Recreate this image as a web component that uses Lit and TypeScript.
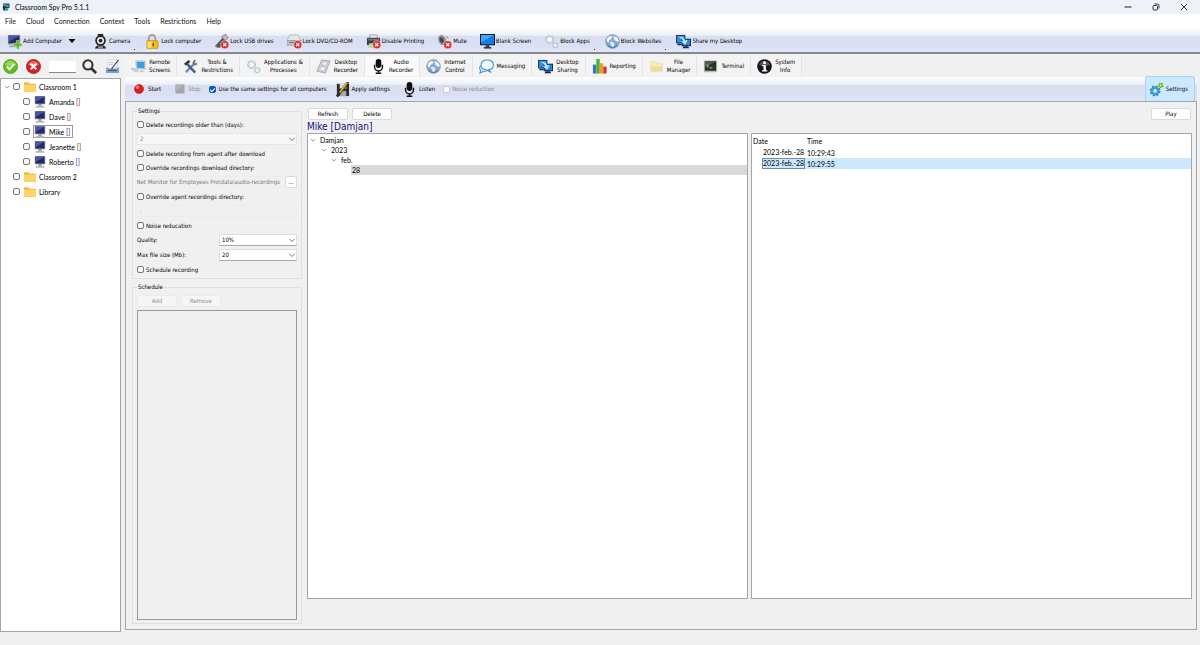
import { LitElement, html, svg, css, nothing, type TemplateResult } from "lit";
import { customElement, property, state } from "lit/decorators.js";
import { classMap } from "lit/directives/class-map.js";

/* ---------- icon artwork, drawn on a 16 x 16 grid ---------- */

const noBadge = svg`
  <circle cx="11.500" cy="11.500" r="4.300" fill="#e02a2a" stroke="#fff" stroke-width=".5"/>
  <path d="M9.900 9.900l3.200 3.200M13.100 9.900l-3.200 3.200" stroke="#fff" stroke-width="1.400"/>`;

const globe = svg`
  <circle cx="8" cy="8" r="7.400" fill="#86a9d3" stroke="#8b98aa" stroke-width=".6"/>
  <path d="M2 5l3-3 3 .6L7 5 4.600 6.500 4 9 2 8zM9 2l4 1.600 2 4-2.600.4L10 6z" fill="#f5f9fd"/>
  <path d="M7 8l3 1.500L9.500 13l-2 1.600-1-3L5 9z" fill="#dbe8f6"/>
  <path d="M2.500 11.500c2 3.400 8 4 11 0" stroke="#41689c" fill="none"/>`;

const gears = svg`
  <circle cx="6" cy="6" r="4" fill="#eef4f8" stroke="#b0bfcb" stroke-width="1.600" stroke-dasharray="1.600 .7"/>
  <circle cx="6" cy="6" r="3.200" fill="#f4f9fc" stroke="#b4c3cf" stroke-width=".8"/>
  <circle cx="12" cy="12" r="2.600" fill="#eef4f8" stroke="#a3b4c2" stroke-width="1.400" stroke-dasharray="1.300 .6"/>`;

const share = svg`
  <path d="M0 1h10v9H0z" fill="#123a66"/><path d="M1 2h8v7H1z" fill="#2d8fe0"/>
  <path d="M6 5h10v8H6z" fill="#0e2c50"/><path d="M7 6h8v6H7z" fill="#2585e0"/>
  <path d="M8 13h5l1 2.300H7z" fill="#223"/><path d="M2 10h4v2H1z" fill="#234"/>
  <path d="M2 3c5-.5 7 1 8 4l2.500-.6-2.500 5-5-3.400 2.500-.4C7 5.500 5 4 2 3z" fill="#b9e4fb"/>`;

const mic = svg`
  <rect x="5" y="0" width="6" height="9.500" rx="3" fill="#0c0c0c"/>
  <path d="M3.800 6v2.500a4.200 4.200 0 0 0 8.400 0V6M8 12.500V15" fill="none" stroke="#0c0c0c" stroke-width="1.500"/>
  <path d="M5 15.200h6" stroke="#0c0c0c" stroke-width="1.600"/>`;

const ICONS: Record<string, TemplateResult> = {
  app: svg`<path d="M2 1h13v9H2z" fill="#164a66"/><path d="M3 2h5v4H3z" fill="#3fa66a"/><path d="M9 3h5v5H9z" fill="#2c6fb0"/>
    <path d="M1 8h6v7H3z" fill="#19324d"/><path d="M8 10l5 1-1 4H6z" fill="#46955b"/><path d="M9 4l3 2-3 2z" fill="#e4d57a"/>`,
  pc: svg`<path d="M1 0h14v11H1z" fill="#8a8f98"/><path d="M2 1h12v9H2z" fill="#252b66"/><path d="M2 1h12L2 8z" fill="#4d57a0"/>
    <path d="M6 11h4v2H6z" fill="#777"/><path d="M3 13h10l1 2.500H2z" fill="#b5b8bd"/>`,
  addPc: svg`<path d="M1 1h13v10H1z" fill="#777d8a"/><path d="M2 2h11v7.500H2z" fill="#252b66"/><path d="M2 2h11L2 8z" fill="#4d57a0"/>
    <path d="M3 12h7l1 2H2z" fill="#a5a8ad"/><path d="M10 7h3v3h3v3h-3v3h-3v-3H7v-3h3z" fill="#59b52c" stroke="#e8f6df" stroke-width=".5"/>`,
  camera: svg`<path d="M5 0h6v2H5z" fill="#222"/><circle cx="8" cy="7" r="5.600" fill="#222"/><circle cx="8" cy="7" r="3.800" fill="#e9e9e9"/>
    <circle cx="8" cy="7" r="2" fill="#222"/><path d="M2 15.500c1-3 3-3.500 6-3.500s5 .5 6 3.500z" fill="#222"/><path d="M5.500 13.300h5v1.200h-5z" fill="#ddd"/>`,
  lock: svg`<path d="M4 8V4.500a3.500 3.500 0 0 1 7 0V8" fill="none" stroke="#9da1a8" stroke-width="2"/>
    <rect x="2" y="7" width="12" height="8.500" rx="1" fill="#f4b81c" stroke="#b98409" stroke-width=".6"/><path d="M3 8h4v6.500H3z" fill="#ffe07a"/>
    <path d="M8 9.500h1.500v3.500H8z" fill="#7a5606"/>`,
  usb: svg`<path d="M1 13l8-9 4 3-7 8z" fill="#555a60"/><path d="M8 3l4-3 3 4-3 3z" fill="#b9bec5" stroke="#555" stroke-width=".6"/>
    <path d="M2 12c0 3 3 3 4 1" fill="none" stroke="#777"/>${noBadge}`,
  dvd: svg`<path d="M3 1h9l3 6H0z" fill="#e6e7ea" stroke="#999" stroke-width=".6"/><path d="M0 7h15v5H0z" fill="#c0c3c8" stroke="#888" stroke-width=".6"/>
    <path d="M2 9h6" stroke="#666"/>${noBadge}`,
  printer: svg`<path d="M4 1h8v5H4z" fill="#e9e9ea" stroke="#777" stroke-width=".6"/><rect x="1" y="4" width="14" height="8" rx="1" fill="#3a3d42"/>
    <path d="M2 5h12v2H2z" fill="#70757c"/><path d="M3 10h7v5H3z" fill="#b7dba5"/>${noBadge}`,
  mute: svg`<ellipse cx="5.500" cy="6.500" rx="4" ry="5.500" fill="#8b8e93" transform="rotate(-20 5.500 6.500)"/>
    <ellipse cx="5" cy="6.500" rx="2" ry="3.200" fill="#45484c" transform="rotate(-20 5 6.500)"/><path d="M10 2l2 3" stroke="#888"/>${noBadge}`,
  blank: svg`<path d="M0 0h16v12H0z" fill="#101522"/><path d="M1 1h14v10H1z" fill="#157bea"/><path d="M1 1h14L1 9z" fill="#43a4fb"/>
    <path d="M6 12h4v2H6z" fill="#333"/><path d="M4 14h8v1.500H4z" fill="#222"/>`,
  gears,
  globe,
  share,
  mic,
  remote: svg`<path d="M5 2h10v9L6 10z" fill="#dfe4ea" stroke="#9aa5b0" stroke-width=".6"/><path d="M6 3h8.300v7l-7.800-.8z" fill="#3e9fe8"/>
    <path d="M0 9l6 1 3 3-4 1.500-5-3z" fill="#c9ccd1"/><path d="M9 12l5 1-3 1.500z" fill="#b0b4ba"/>`,
  tools: svg`<path d="M3 14L13 4" stroke="#7b8794" stroke-width="2.400"/><path d="M13 1l-2 3 1 2 3-1" fill="none" stroke="#69737e" stroke-width="1.800"/>
    <path d="M4 5l9 9.500" stroke="#3c5c94" stroke-width="2.600"/><path d="M1 5l5-4 2 2-5 4z" fill="#33373d"/>`,
  film: svg`<path d="M6 1l9 1-5 13-9-2z" fill="#cfd3db" stroke="#8d93a0" stroke-width=".7"/>
    <path d="M7.300 3l5 .6-1.300 3.400-5-.8zM5.300 8l5 .9-1.500 4-5-1z" fill="#f1f3f7" stroke="#8d93a0" stroke-width=".4"/>`,
  chat: svg`<path d="M8.500 1c4 0 6.800 2 6.800 5s-2 5-5 5.300L13 14.500l-6-3.200C4 11 2.200 9 2.200 6S5 1 8.500 1z" fill="#f8fcff" stroke="#3f97d8" stroke-width="1.200"/>
    <path d="M2.300 7C0 8.500.2 11 2 12l-1 3 4-2c2 .4 3 .2 4-1" fill="none" stroke="#3f97d8" stroke-width="1.100"/>`,
  chart: svg`<path d="M1 6h3.400v9.500H1z" fill="#3572d0"/><path d="M4.600 0h3.600v15.500H4.600z" fill="#4cae32"/><path d="M8.400 4.500h3.400v11H8.400z" fill="#f09a1a"/>
    <path d="M12 8h3.500v7.500H12z" fill="#d83228"/>`,
  file: svg`<path d="M2 3h5l1 1.500h6V13H2z" fill="#f5ecc0" stroke="#ddcf93" stroke-width=".5"/><path d="M2 8h12v5H2z" fill="#eddd92"/>`,
  terminal: svg`<rect x="1" y="1.500" width="14" height="12.500" rx="1" fill="#b7bab4"/><path d="M2 2.500h12v10H2z" fill="#28352a"/><path d="M2 2.500h12L2 9z" fill="#4b5f4c"/>
    <path d="M4 6l2 1.500L4 9M7 9.500h3" fill="none" stroke="#e8f0e4" stroke-width=".8"/>`,
  info: svg`<circle cx="8" cy="8" r="7.800" fill="#15151c"/><path d="M2 6a6.500 6.500 0 0 1 12 0c-3 2-9 2-12 0z" fill="#50505c"/>
    <circle cx="8" cy="4" r="1.600" fill="#fff"/><path d="M5.500 6.400h4V12H11v1.200H5.300V12H7V7.600H5.500z" fill="#fff"/>`,
  ok: svg`<circle cx="8" cy="8" r="7.500" fill="#62bb1d" stroke="#4a9a12" stroke-width=".8"/><path d="M2 6a6.500 6.500 0 0 1 12 0C11 8 5 8 2 6z" fill="#95d85a"/>
    <path d="M4 8l3 3 5-5.500" fill="none" stroke="#fff" stroke-width="2.200"/>`,
  cancel: svg`<circle cx="8" cy="8" r="7.500" fill="#d81f1f" stroke="#a81616" stroke-width=".8"/><path d="M2 6a6.500 6.500 0 0 1 12 0C11 8 5 8 2 6z" fill="#ee6262"/>
    <path d="M5 5l6 6M11 5l-6 6" stroke="#fff" stroke-width="2.400"/>`,
  search: svg`<circle cx="6.300" cy="6.300" r="4.900" fill="none" stroke="#333" stroke-width="2.200"/><path d="M10 10l5 5" stroke="#333" stroke-width="3"/>`,
  note: svg`<path d="M1 9h14v6H1z" fill="#7fa5cf"/><path d="M3 1h10v9H3z" fill="#f6f7f9" stroke="#b9c0c9" stroke-width=".5"/>
    <path d="M4 4h6M4 6h4" stroke="#aab4c0" stroke-width=".8"/><path d="M14.500 1L8 9l-1 2" stroke="#444" stroke-width="1.200" fill="none"/><path d="M3 11.500h10v1.500H3z" fill="#3e5f8a"/>`,
  start: svg`<circle cx="8" cy="8" r="6" fill="#de1d1d" stroke="#a91414" stroke-width=".8"/><circle cx="6" cy="5.500" r="2.500" fill="#f27070"/>`,
  stop: svg`<path d="M2 2h12v12H2z" fill="#a5a5a5"/><path d="M2 2h12L2 11z" fill="#b4b4b4"/>`,
  save: svg`<path d="M2 2h13v13H2z" fill="#2b2b2e"/><path d="M5 2h7v5H5z" fill="#d9d9dc"/><path d="M5 9.500h7V15H5z" fill="#a9a9ad"/>
    <path d="M14 0L5 12l-3 3.500" stroke="#2b2b2e" stroke-width="2.800" fill="none"/><path d="M13 .5L5 11.500" stroke="#e8b323" stroke-width="1.700" fill="none"/>`,
  folder: svg`<path d="M0 1.500h6L7.500 3.500H16v11H0z" fill="#f3b73c"/><path d="M0 5h16v9.500H0z" fill="#ffd56b"/>`,
  settings: svg`<circle cx="6.500" cy="9.500" r="4.500" fill="#3f9bd3" stroke="#2d84bd" stroke-width="2.600" stroke-dasharray="2.100 1.400"/>
    <circle cx="6.500" cy="9.500" r="4.600" fill="#3f9bd3"/><circle cx="6.500" cy="9.500" r="2" fill="#d3edff"/>
    <circle cx="12.500" cy="3.500" r="2" fill="#7fcf30" stroke="#71bd28" stroke-width="2.200" stroke-dasharray="1.600 .6"/><circle cx="12.500" cy="3.500" r=".9" fill="#dff4c8"/>`,
  chevron: svg`<path d="M2.500 5.500L8 11l5.500-5.500" fill="none" stroke="#555" stroke-width="1.600"/>`,
  drop: svg`<path d="M1 4h14l-7 8z" fill="#000"/>`,
  minimize: svg`<path d="M1 8h14" stroke="#222" stroke-width="2"/>`,
  restore: svg`<rect x="2" y="5" width="9" height="9" rx="2" fill="none" stroke="#222" stroke-width="1.800"/>
    <path d="M5 2h6q3 0 3 3v6" fill="none" stroke="#222" stroke-width="1.800"/>`,
  close: svg`<path d="M2 2l12 12M14 2L2 14" stroke="#222" stroke-width="1.800"/>`,
};

const icon = (name: string, size = "m") =>
  html`<svg class="icon ${size}" viewBox="0 0 16 16" aria-hidden="true">${ICONS[name]}</svg>`;

const shared = css`
  * { box-sizing: border-box; }
  :host {
    --ui: "DejaVu Sans Condensed", "DejaVu Sans", sans-serif;
    --shell: Lato, "Open Sans", sans-serif;
    --line: #a3a5ad;
    font: 6px/8px var(--ui);
    color: #000;
  }
  button, input, select { font: inherit; color: inherit; margin: 0; padding: 0; border: 0; background: none; }
  button { display: flex; align-items: center; white-space: nowrap; }
  .icon { display: block; flex: none; }
  .xs { width: 6px; height: 6px; }
  .s { width: 8px; height: 8px; }
  .sm { width: 12px; height: 12px; }
  .m { width: 15px; height: 15px; }
  input[type="checkbox"] {
    appearance: none; flex: none; width: 7px; height: 7px; position: relative;
    border: 1px solid #777; border-radius: 2px; background: #f8f8f8;
  }
  input[type="checkbox"]:checked { background: #0a5fb4; border-color: #0a5fb4; }
  input[type="checkbox"]:checked::after {
    content: ""; position: absolute; left: 1px; top: 0; width: 2px; height: 4px;
    border: solid #fff; border-width: 0 1px 1px 0; transform: rotate(45deg);
  }
  input[type="checkbox"]:disabled { border-color: #ccc; background: #fbfbfb; }
  .band { background: linear-gradient(#fdfdff, #eef0fa 30%, #d9def1 34%, #dce0f3 80%, #e4e8f7); }
  .push {
    justify-content: center; width: 40px; height: 12px; background: #fdfdfd;
    border: 1px solid #dadada; border-radius: 2px;
  }
  .push:disabled { color: #8a8a8a; background: #f6f6f6; border-color: #ebebeb; }
`;

/* ---------- computers tree on the left ---------- */

interface Room { name: string; open: boolean; members: string[] }

@customElement("computer-tree")
class ComputerTree extends LitElement {
  @state() private selected = "Mike";
  private rooms: Room[] = [
    { name: "Classroom 1", open: true, members: ["Amanda", "Dave", "Mike", "Jeanette", "Roberto"] },
    { name: "Classroom 2", open: false, members: [] },
    { name: "Library", open: false, members: [] },
  ];

  static styles = [shared, css`
    :host { display: flex; flex-direction: column; }
    .tools { display: flex; align-items: center; gap: 8px; height: 25px; margin-bottom: -1px; padding: 0 3px; }
    .find { width: 27px; height: 12px; margin-right: -2px; background: #fff; border-bottom: 1px solid #888; }
    .list { flex: 1; margin: 0; padding: 0; list-style: none; background: #fff; border: 1px solid var(--line); font: 7px/8px var(--shell); }
    .row { display: flex; align-items: center; height: 15px; gap: 3px; padding-left: 3px; }
    .twist { width: 6px; }
    .row label { display: flex; align-items: center; gap: 3px; height: 13px; padding-right: 2px; border: 1px solid transparent; }
    .child { padding-left: 13px; }
    .row .picked { border-color: #999; }
    .red { color: #7c2020; }
    .blue { color: #1c3478; }
  `];

  private row(name: string, opts: { child?: boolean; open?: boolean }) {
    const id = "pc-" + name.replace(" ", "-");
    return html`<li class=${classMap({ row: true, child: !!opts.child })}>
      <span class="twist">${opts.open ? icon("chevron", "xs") : nothing}</span>
      <input type="checkbox" id=${id} />
      <label for=${id} class=${classMap({ picked: name === this.selected })} @dblclick=${() => (this.selected = name)}>
        ${icon(opts.child ? "pc" : "folder", "sm")}
        <span>${name}${opts.child ? html` <span class=${name === "Roberto" || name === "Mike" ? "blue" : "red"}>[]</span>` : nothing}</span>
      </label>
    </li>`;
  }

  render() {
    return html`
      <div class="tools">
        <button aria-label="Select all">${icon("ok")}</button>
        <button aria-label="Clear selection">${icon("cancel")}</button>
        <input class="find" aria-label="Find" />
        <button aria-label="Search">${icon("search")}</button>
        <button aria-label="Edit">${icon("note")}</button>
      </div>
      <ul class="list">
        ${this.rooms.map((r) => html`${this.row(r.name, { open: r.open })}${r.members.map((m) => this.row(m, { child: true }))}`)}
      </ul>`;
  }
}

/* ---------- settings column ---------- */

@customElement("recorder-settings")
class RecorderSettings extends LitElement {
  static styles = [shared, css`
    :host { display: flex; flex-direction: column; gap: 3px; }
    fieldset { display: flex; flex-direction: column; gap: 3px; margin: 0; min-width: 0; padding: 3px 4px; border: 1px solid #dfdfdf; }
    legend { padding: 0 1px; height: 10px; line-height: 10px; }
    .fill { flex: 1; }
    .check { display: flex; align-items: center; gap: 2px; height: 11px; white-space: nowrap; }
    .field { display: grid; grid-template-columns: 82px 1fr; align-items: center; height: 12px; }
    .combo { position: relative; height: 12px; }
    .combo select { appearance: none; width: 100%; height: 12px; padding-left: 2px; background: #fff; border: 1px solid #ddd; border-bottom-color: #aaa; }
    .combo select:disabled { color: #888; opacity: 1; background: #f7f7f7; border-color: #e6e6e6; }
    .combo .icon { position: absolute; right: 1px; top: 2px; pointer-events: none; }
    .path { display: flex; gap: 4px; height: 12px; color: #777; }
    .path input { flex: 1; min-width: 0; border: 1px solid #ececec; border-left: 0; direction: rtl; text-align: right; }
    .path .plain { direction: ltr; text-align: left; padding-left: 3px; }
    .path button { width: 12px; color: #000; }
    .buttons { display: flex; gap: 4px; }
    .slots { flex: 1; border: 1px solid #999; }
  `];

  private check(id: string, text: string) {
    return html`<div class="check"><input type="checkbox" id=${id} /><label for=${id}>${text}</label></div>`;
  }

  private combo(id: string, value: string, disabled = false) {
    return html`<div class="combo"><select id=${id} aria-label=${id} ?disabled=${disabled}><option>${value}</option></select>${icon("chevron", "s")}</div>`;
  }

  render() {
    return html`
      <fieldset>
        <legend>Settings</legend>
        ${this.check("older", "Delete recordings older than (days):")}
        ${this.combo("days", "2", true)}
        ${this.check("after", "Delete recording from agent after download")}
        ${this.check("download", "Override recordings download directory:")}
        <div class="path">
          <input disabled aria-label="Download directory" value="Net Monitor for Employees Pro\\data\\audio-recordings" />
          <button class="push" aria-label="Browse">...</button>
        </div>
        ${this.check("agent", "Override agent recordings directory:")}
        <div class="path"><input class="plain" disabled aria-label="Agent directory" value="." /></div>
        ${this.check("noise", "Noise reducation")}
        <div class="field"><label for="quality">Quality:</label>${this.combo("quality", "10%")}</div>
        <div class="field"><label for="size">Max file size (Mb):</label>${this.combo("size", "20")}</div>
        ${this.check("schedule", "Schedule recording")}
      </fieldset>
      <fieldset class="fill">
        <legend>Schedule</legend>
        <div class="buttons"><button class="push" disabled>Add</button><button class="push" disabled>Remove</button></div>
        <div class="slots"></div>
      </fieldset>`;
  }
}

/* ---------- recordings browser ---------- */

@customElement("recordings-view")
class RecordingsView extends LitElement {
  @property() owner = "Mike [Damjan]";
  private nodes = [
    { text: "Damjan", depth: 0 },
    { text: "2023", depth: 1 },
    { text: "feb.", depth: 2 },
    { text: "28", depth: 3, picked: true },
  ];
  private files = [
    { date: "2023-feb.-28", time: "10:29:43" },
    { date: "2023-feb.-28", time: "10:29:55", picked: true },
  ];

  static styles = [shared, css`
    :host { display: grid; grid-template-columns: 1fr 1fr; gap: 3px; min-width: 0; }
    .pane { display: flex; flex-direction: column; min-width: 0; }
    .head { height: 26px; }
    .buttons { display: flex; gap: 4px; padding: 1px; }
    .right { justify-content: flex-end; }
    h1 { margin: 0; font: 10px/12px var(--ui); color: #10107c; }
    .box { flex: 1; background: #fff; border: 1px solid var(--line); font: 7px/10px var(--shell); }
    .tree { margin: 0; padding: 1px 0 0; list-style: none; }
    .node { display: flex; align-items: center; height: 10px; }
    .d1 { padding-left: 11px; }
    .d2 { padding-left: 21px; }
    .d3 { padding-left: 31px; }
    .twist { width: 12px; padding-left: 2px; }
    .name { flex: 1; }
    .picked .name { background: #d9d9d9; padding-left: 1px; }
    table { width: 100%; border-collapse: collapse; table-layout: fixed; white-space: nowrap; }
    th { height: 13px; font-weight: 400; text-align: left; padding: 0 2px; }
    .date { width: 53px; padding: 0 1px; }
    td { height: 11px; padding: 0 2px; }
    td:first-child { padding: 0 0 0 10px; }
    .chip { display: block; line-height: 9px; border: 1px solid transparent; }
    .on .chip { border-color: #6d8ba3; background: #cce8ff; }
    .on td + td { background: #cce8ff; }
  `];

  render() {
    return html`
      <section class="pane">
        <div class="head">
          <div class="buttons"><button class="push">Refresh</button><button class="push">Delete</button></div>
          <h1>${this.owner}</h1>
        </div>
        <ul class="box tree">
          ${this.nodes.map((n) => html`<li class=${classMap({ node: true, ["d" + n.depth]: true, picked: !!n.picked })}>
            <span class="twist">${n.picked ? nothing : icon("chevron", "xs")}</span><span class="name">${n.text}</span></li>`)}
        </ul>
      </section>
      <section class="pane">
        <div class="head"><div class="buttons right"><button class="push">Play</button></div></div>
        <div class="box">
          <table>
            <thead><tr><th class="date">Date</th><th>Time</th></tr></thead>
            <tbody>${this.files.map((f) => html`<tr class=${f.picked ? "on" : ""}><td><span class="chip">${f.date}</span></td><td>${f.time}</td></tr>`)}</tbody>
          </table>
        </div>
      </section>`;
  }
}

/* ---------- window ---------- */

const MENU = ["File", "Cloud", "Connection", "Context", "Tools", "Restrictions", "Help"];

const ACTIONS: { text: string; icon: string; menu?: "arrow" | "dot" }[] = [
  { text: "Add Computer", icon: "addPc", menu: "arrow" },
  { text: "Camera", icon: "camera", menu: "dot" },
  { text: "Lock computer", icon: "lock" },
  { text: "Lock USB drives", icon: "usb" },
  { text: "Lock DVD/CD-ROM", icon: "dvd" },
  { text: "Disable Printing", icon: "printer" },
  { text: "Mute", icon: "mute" },
  { text: "Blank Screen", icon: "blank" },
  { text: "Block Apps", icon: "gears", menu: "dot" },
  { text: "Block Websites", icon: "globe", menu: "dot" },
  { text: "Share my Desktop", icon: "share" },
];

const TABS: [string, string, string?][] = [
  ["remote", "Remote", "Screens"],
  ["tools", "Tools &", "Restrictions"],
  ["gears", "Applications &", "Processes"],
  ["film", "Desktop", "Recorder"],
  ["mic", "Audio", "Recorder"],
  ["globe", "Internet", "Control"],
  ["chat", "Messaging"],
  ["share", "Desktop", "Sharing"],
  ["chart", "Reporting"],
  ["file", "File", "Manager"],
  ["terminal", "Terminal"],
  ["info", "System", "Info"],
];

@customElement("app-root")
class AppRoot extends LitElement {
  @state() private tab = "Audio";

  static styles = [shared, css`
    :host { display: flex; flex-direction: column; height: 100vh; background: #f0f0f0; overflow: hidden; }
    .title { display: flex; align-items: center; gap: 5px; height: 14px; padding: 0 12px 0 2px; background: #edf2fa; font: 7px/10px var(--shell); }
    .title .name { flex: 1; }
    .title .win { margin-left: 15px; }
    .menu { display: flex; align-items: center; gap: 10px; height: 14px; padding-left: 5px; background: #fff; font: 7px/10px var(--shell); }
    .menu a { color: #111; text-decoration: none; }
    .actions { display: flex; align-items: center; height: 26px; gap: 13px; padding: 2px 7px 0; border-bottom: 2px solid #85878f; }
    .actions button { gap: 1px; }
    .wide { margin-right: 4px; }
    .wide .s { margin-left: 5px; }
    .dotted { position: relative; margin-right: 2px; }
    .dotted::after { content: ""; position: absolute; right: -5px; bottom: -1px; width: 1px; height: 1px; background: #222; }
    .main { flex: 1; display: flex; gap: 4px; min-height: 0; }
    computer-tree { width: 121px; }
    .work { flex: 1; display: flex; flex-direction: column; min-width: 0; margin: 0 3px 2px 0; }
    .tabs { display: flex; height: 23px; padding-top: 2px; }
    .tabs button { gap: 3px; height: 20px; padding: 0 6px; background: #f3f3f3; border-right: 1px solid #e4e4e4; text-align: center; }
    .tabs .active { background: #fafafa; }
    .record { display: flex; align-items: center; height: 24px; padding: 0 2px 0 8px; gap: 8px; }
    .record button, .record label { display: flex; align-items: center; gap: 2px; white-space: nowrap; }
    .record .off { color: #8b8b8b; }
    .record .start { gap: 3px; margin-right: 5px; }
    .record .off + label { margin-left: 1px; }
    .record .group { margin-left: 4px; }
    .record .settings { gap: 2px; height: 26px; padding: 0 6px 0 3px; margin-left: auto; background: #cce8ff; border: 1px solid #a6d5fa; border-radius: 2px; }
    .panel { flex: 1; display: flex; gap: 5px; min-height: 0; padding: 4px 4px 5px 6px; border: 1px solid var(--line); }
    recorder-settings { width: 170px; }
    recordings-view { flex: 1; margin: 1px 0 25px; }
    .status { height: 13px; }
  `];

  render() {
    return html`
      <header class="title">
        ${icon("app", "s")}<span class="name">Classroom Spy Pro 5.1.1</span>
        <button class="win" aria-label="Minimize">${icon("minimize", "s")}</button>
        <button class="win" aria-label="Restore">${icon("restore", "s")}</button>
        <button class="win" aria-label="Close">${icon("close", "s")}</button>
      </header>
      <nav class="menu">${MENU.map((m) => html`<a href="#">${m}</a>`)}</nav>
      <div class="actions band">
        ${ACTIONS.map((a) => html`<button class=${classMap({ wide: a.menu === "arrow", dotted: a.menu === "dot" })}>
          ${icon(a.icon)}<span>${a.text}</span>${a.menu === "arrow" ? icon("drop", "s") : nothing}</button>`)}
      </div>
      <div class="main">
        <computer-tree></computer-tree>
        <main class="work">
          <div class="tabs">
            ${TABS.map(([art, first, second]) => html`<button class=${classMap({ active: this.tab === first })} @click=${() => (this.tab = first)}>
              ${icon(art)}<span>${first}${second ? html`<br />${second}` : nothing}</span></button>`)}
          </div>
          <div class="record band">
            <button class="start">${icon("start", "sm")}Start</button>
            <button class="off" disabled>${icon("stop", "sm")}Stop</button>
            <label><input type="checkbox" checked />Use the same settings for all computers</label>
            <button>${icon("save")}Apply settings</button>
            <button class="group">${icon("mic")}Listen</button>
            <label class="off"><input type="checkbox" disabled />Noise reduction</label>
            <button class="settings">${icon("settings")}Settings</button>
          </div>
          <div class="panel">
            <recorder-settings></recorder-settings>
            <recordings-view></recordings-view>
          </div>
        </main>
      </div>
      <footer class="status"></footer>`;
  }
}
